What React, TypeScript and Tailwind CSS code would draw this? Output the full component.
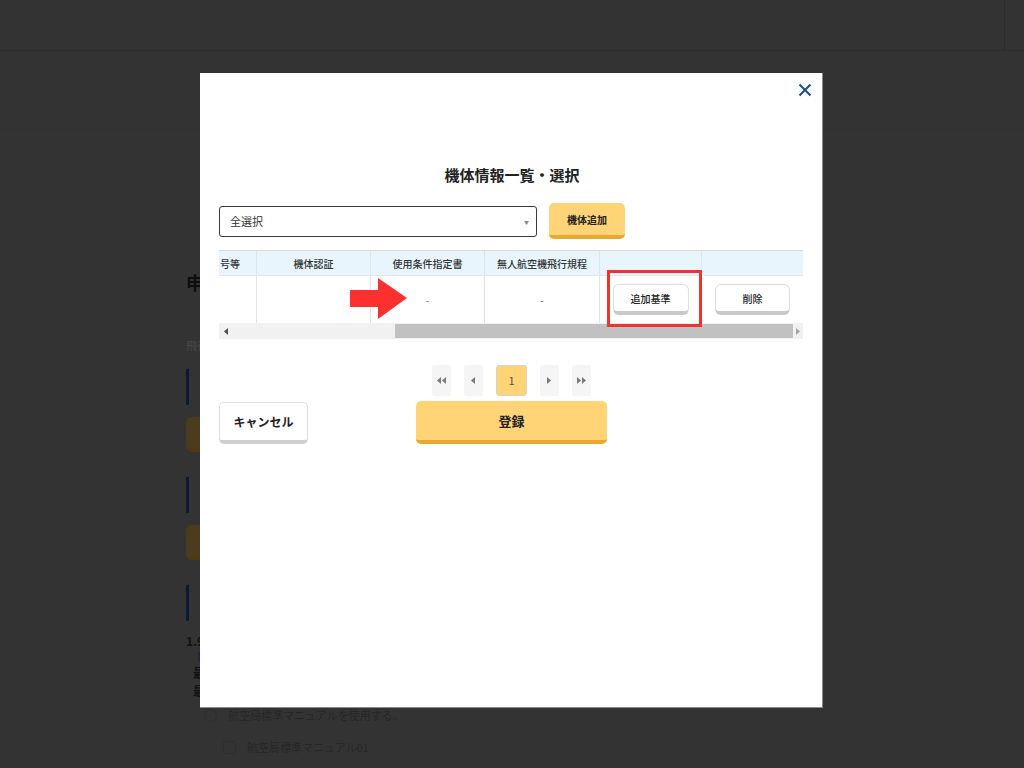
import React from "react";

const F = { fontFamily: '"Noto Sans CJK JP", "Noto Sans", sans-serif' };

function Background() {
  return (
    <div className="absolute inset-0 flex flex-col">
      <div className="h-[51px] border-b border-[#2c2c2c] flex justify-end shrink-0">
        <div className="w-[20px] border-l border-[#2c2c2c]" />
      </div>
      <div className="h-[79px] border-b border-[#303030] shrink-0" />
      <div className="flex flex-col pl-[186px] pt-[140px]">
        <div className="text-[18px] leading-[24px] font-bold text-[#0d0d0d]">申請内容</div>
        <div className="mt-[45px] text-[11px] leading-[12px] text-[#4a4a4a]">飛行情報</div>
        <div className="mt-[18px] w-[3px] h-[36px] bg-[#0b1a33]" />
        <div className="mt-[12px] w-[60px] h-[35px] bg-[#4a3c1c] rounded-[6px] border-b-[3px] border-[#4d3a12]" />
        <div className="mt-[25px] w-[3px] h-[36px] bg-[#0b1a33]" />
        <div className="mt-[12px] w-[60px] h-[35px] bg-[#4a3c1c] rounded-[6px] border-b-[3px] border-[#4d3a12]" />
        <div className="mt-[25px] w-[3px] h-[36px] bg-[#0b1a33]" />
        <div className="mt-[13px] text-[12px] leading-[14px] font-bold text-[#111]">1.9 飛行マニュアル</div>
        <div className="ml-[12px] mt-[4px] w-[2px] h-[10px] bg-[#12303a]" />
        <div className="ml-[7px] mt-[2px] text-[12px] leading-[18px] font-bold text-[#111]">最</div>
        <div className="ml-[7px] text-[12px] leading-[18px] font-bold text-[#111]">最</div>
        <div className="ml-[18px] mt-[8px] flex items-center gap-[11px]">
          <div className="w-[13px] h-[13px] rounded-full border border-[#2d2d2d]" />
          <span className="text-[11px] leading-[14px] text-[#262626]">航空局標準マニュアルを使用する。</span>
        </div>
        <div className="ml-[37px] mt-[18px] flex items-center gap-[11px]">
          <div className="w-[13px] h-[13px] rounded-[2px] border border-[#2d2d2d]" />
          <span className="text-[11px] leading-[14px] text-[#262626]">航空局標準マニュアル01</span>
        </div>
      </div>
    </div>
  );
}

function Arrow({ dir, double }: { dir: "l" | "r"; double?: boolean }) {
  const tri = (x: number) =>
    dir === "l" ? `${x + 4},1 ${x + 4},8 ${x},4.5` : `${x},1 ${x},8 ${x + 4},4.5`;
  return (
    <svg width={double ? 10 : 5} height="9" viewBox={double ? "0 0 10 9" : "0 0 5 9"}>
      <polygon points={tri(0)} fill="#7a7a7a" />
      {double && <polygon points={tri(5)} fill="#7a7a7a" />}
    </svg>
  );
}

function Modal() {
  const th = "border-r border-[#dfe6ea] flex items-center justify-center text-[10px] font-medium text-[#333]";
  const td = "border-r border-[#e3e3e3] flex items-center justify-center text-[10px] text-[#666]";
  return (
    <div className="absolute left-[200px] top-[73px] w-[623px] h-[635px] bg-white border-r border-b border-[#8a8a8a] flex flex-col px-[19px] pt-[92px]">
      <button className="absolute right-[10px] top-[10px] w-[14px] h-[14px] flex items-center justify-center">
        <svg width="14" height="14" viewBox="0 0 14 14">
          <path d="M1.5 1.5 L12.5 12.5 M12.5 1.5 L1.5 12.5" stroke="#1b4c8a" strokeWidth="2" />
        </svg>
      </button>
      <div className="text-center text-[15px] leading-[20px] font-bold text-[#222] pl-[2px]">機体情報一覧・選択</div>

      <div className="mt-[18px] flex items-start">
        <div className="mt-[3px] w-[318px] h-[31px] border-[1.5px] border-[#3a3a3a] rounded-[3px] flex items-center justify-between pl-[10px] pr-[7px]">
          <span className="text-[11px] text-[#333]">全選択</span>
          <span className="text-[5px] text-[#888]">▼</span>
        </div>
        <button className="ml-[12px] w-[76px] h-[36px] bg-[#fed476] rounded-[5px] border-b-[4px] border-[#e8a92e] flex items-center justify-center text-[10px] font-bold text-[#222]">
          機体追加
        </button>
      </div>

      <div className="relative mt-[11px] w-[584px]">
        <div className="flex h-[25px] bg-[#e8f5fd] border-t border-[#dcdcdc]">
          <div className={`${th} w-[38px] !justify-start pl-[1px]`}>号等</div>
          <div className={`${th} w-[114px]`}>機体認証</div>
          <div className={`${th} w-[114px]`}>使用条件指定書</div>
          <div className={`${th} w-[115px]`}>無人航空機飛行規程</div>
          <div className={`${th} w-[102px]`}></div>
          <div className="w-[101px]"></div>
        </div>
        <div className="flex h-[48px] border-t border-[#e6e6e6]">
          <div className={`${td} w-[38px]`}></div>
          <div className={`${td} w-[114px]`}></div>
          <div className={`${td} w-[114px]`}>-</div>
          <div className={`${td} w-[115px]`}>-</div>
          <div className={`${td} w-[102px]`}>
            <button className="w-[76px] h-[31px] bg-white rounded-[6px] border border-[#dedede] border-b-[4px] border-b-[#c9c9c9] text-[10px] font-medium text-[#222]">
              追加基準
            </button>
          </div>
          <div className="w-[101px] flex items-center justify-center">
            <button className="w-[75px] h-[31px] bg-white rounded-[6px] border border-[#dedede] border-b-[4px] border-b-[#c9c9c9] text-[10px] font-medium text-[#222]">
              削除
            </button>
          </div>
        </div>
        <div className="flex items-center h-[16px] bg-[#f1f1f1]">
          <div className="w-[176px] pl-[5px] flex items-center">
            <svg width="4" height="7" viewBox="0 0 4 7"><polygon points="4,0 4,7 0,3.5" fill="#505050" /></svg>
          </div>
          <div className="w-[398px] h-[14px] bg-[#c1c1c1]" />
          <div className="pl-[3px] flex items-center">
            <svg width="4" height="7" viewBox="0 0 4 7"><polygon points="0,0 0,7 4,3.5" fill="#a3a3a3" /></svg>
          </div>
        </div>

        <svg className="absolute left-[131px] top-[28px]" width="57" height="41" viewBox="0 0 57 41">
          <polygon points="0,12 28,12 28,0 57,20 28,41 28,29 0,29" fill="#fd3030" />
        </svg>
        <div className="absolute left-[388px] top-[20px] w-[95px] h-[57px] border-[3px] border-[#f23232]" />
      </div>

      <div className="mt-[26px] flex justify-center gap-[13px] pl-[1px]">
        <div className="w-[19px] h-[31px] bg-[#f5f5f5] rounded-[3px] flex items-center justify-center"><Arrow dir="l" double /></div>
        <div className="w-[19px] h-[31px] bg-[#f5f5f5] rounded-[3px] flex items-center justify-center"><Arrow dir="l" /></div>
        <div className="w-[31px] h-[31px] bg-[#fed476] border border-[#d3d3d3] rounded-[3px] flex items-center justify-center text-[11px] text-[#555]">1</div>
        <div className="w-[19px] h-[31px] bg-[#f5f5f5] rounded-[3px] flex items-center justify-center"><Arrow dir="r" /></div>
        <div className="w-[19px] h-[31px] bg-[#f5f5f5] rounded-[3px] flex items-center justify-center"><Arrow dir="r" double /></div>
      </div>

      <div className="mt-[5px] flex items-start">
        <button className="mt-[1px] w-[89px] h-[42px] bg-white rounded-[5px] border border-[#e0e0e0] border-b-[4px] border-b-[#cfcfcf] text-[12px] font-bold text-[#222]">
          キャンセル
        </button>
        <button className="ml-[108px] w-[191px] h-[43px] bg-[#fed476] rounded-[5px] border-b-[4px] border-[#e8a92e] text-[13px] font-bold text-[#222]">
          登録
        </button>
      </div>
    </div>
  );
}

export default function App() {
  return (
    <div style={F} className="relative w-[1024px] h-[768px] bg-[#333333] overflow-hidden">
      <Background />
      <Modal />
    </div>
  );
}
